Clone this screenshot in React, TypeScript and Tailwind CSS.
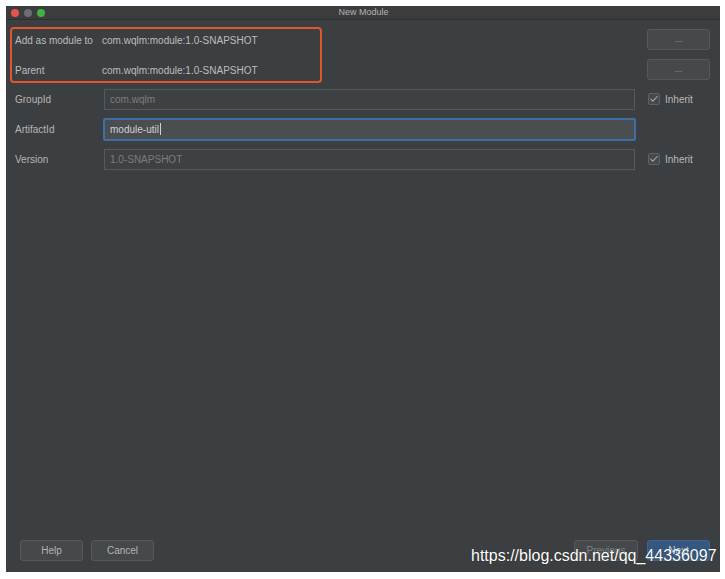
import { Check } from 'lucide-react'

const font = { fontFamily: '"Liberation Sans", Arial, sans-serif' }

function DotsButton() {
  return (
    <button className="w-[63px] h-[21px] rounded-[3px] border border-[#55595b] bg-[#46494b] text-[9px] leading-none text-[#9a9a9a] flex items-center justify-center">
      ...
    </button>
  )
}

function Inherit() {
  return (
    <div className="flex items-center gap-[5px] ml-[13px]">
      <div className="w-[12px] h-[12px] rounded-[2px] border border-[#5d6163] bg-[#45494a] flex items-center justify-center">
        <Check size={10} strokeWidth={2.5} className="text-[#aeb0b2]" />
      </div>
      <span className="text-[10px] text-[#b9b9b9]">Inherit</span>
    </div>
  )
}

function Row({ label, value, focused, inherit }: { label: string; value: string; focused?: boolean; inherit?: boolean }) {
  return (
    <div className="flex items-center h-[30px]">
      <div className="w-[97px] pl-[9px] text-[10px] text-[#b6b6b6]">{label}</div>
      <div
        className={
          focused
            ? 'w-[533px] h-[23px] rounded-[2px] border-2 border-[#3e6ea3] bg-[#4a4e50] flex items-center pl-[5px] text-[10px] text-[#d0d0d0]'
            : 'w-[531px] h-[21px] ml-[1px] border border-[#575a5c] bg-[#3e4143] flex items-center pl-[5px] text-[10px] text-[#7b7d7f]'
        }
      >
        {value}
        {focused && <span className="w-px h-[12px] bg-[#d0d0d0] ml-[1px]" />}
      </div>
      {inherit && <Inherit />}
    </div>
  )
}

export default function App() {
  return (
    <div className="w-[725px] h-[579px] bg-white pt-[6px] pl-[6px] pr-[5px] pb-[7px] relative" style={font}>
      <div className="w-full h-full bg-[#3c3f41] flex flex-col overflow-hidden">
        {/* title bar */}
        <div className="h-[14px] shrink-0 bg-[#3b3c3d] border-b border-[#2e2f30] flex items-center">
          <div className="flex items-center gap-[5px] pl-[5px]">
            <span className="w-[8px] h-[8px] rounded-full bg-[#e5534b]" />
            <span className="w-[8px] h-[8px] rounded-full bg-[#6b6d6e]" />
            <span className="w-[8px] h-[8px] rounded-full bg-[#3fb43f]" />
          </div>
          <div className="flex-1 text-center text-[9px] text-[#b4b4b4] pr-[38px]">New Module</div>
        </div>

        {/* top section */}
        <div className="flex pt-[7px] pl-[4px] pr-[10px]">
          <div className="w-[312px] h-[56px] rounded-[4px] border-2 border-[#e0562d] flex flex-col justify-center gap-[15px] pl-[3px]">
            <div className="flex text-[10px] text-[#bdbdbd]">
              <span className="w-[87px]">Add as module to</span>
              <span>com.wqlm:module:1.0-SNAPSHOT</span>
            </div>
            <div className="flex text-[10px] text-[#bdbdbd]">
              <span className="w-[87px]">Parent</span>
              <span>com.wqlm:module:1.0-SNAPSHOT</span>
            </div>
          </div>
          <div className="flex-1" />
          <div className="flex flex-col gap-[9px] pt-[2px]">
            <DotsButton />
            <DotsButton />
          </div>
        </div>

        {/* form */}
        <div className="flex flex-col pt-[1px]">
          <Row label="GroupId" value="com.wqlm" inherit />
          <Row label="ArtifactId" value="module-util" focused />
          <Row label="Version" value="1.0-SNAPSHOT" inherit />
        </div>

        <div className="flex-1" />

        {/* bottom buttons */}
        <div className="flex items-center pl-[14px] pr-[10px] pb-[11px]">
          <button className="w-[63px] h-[21px] rounded-[3px] border border-[#55595b] bg-[#46494b] text-[10px] text-[#b4b4b4]">Help</button>
          <button className="w-[63px] h-[21px] ml-[8px] rounded-[3px] border border-[#55595b] bg-[#46494b] text-[10px] text-[#b4b4b4]">Cancel</button>
          <div className="flex-1" />
          <button className="w-[64px] h-[21px] rounded-[3px] border border-[#55595b] bg-[#46494b] text-[10px] text-[#7f8183]">Previous</button>
          <button className="w-[63px] h-[21px] ml-[9px] rounded-[3px] border border-[#3d6493] bg-[#365880] text-[10px] text-[#c8d3df]">Next</button>
        </div>
      </div>

      {/* watermark */}
      <div className="absolute left-[471px] top-[546px] text-[16px] leading-[20px] text-white whitespace-nowrap" style={{ textShadow: '0 0 1px rgba(0,0,0,0.6)' }}>
        https://blog.csdn.net/qq_44336097
      </div>
    </div>
  )
}
